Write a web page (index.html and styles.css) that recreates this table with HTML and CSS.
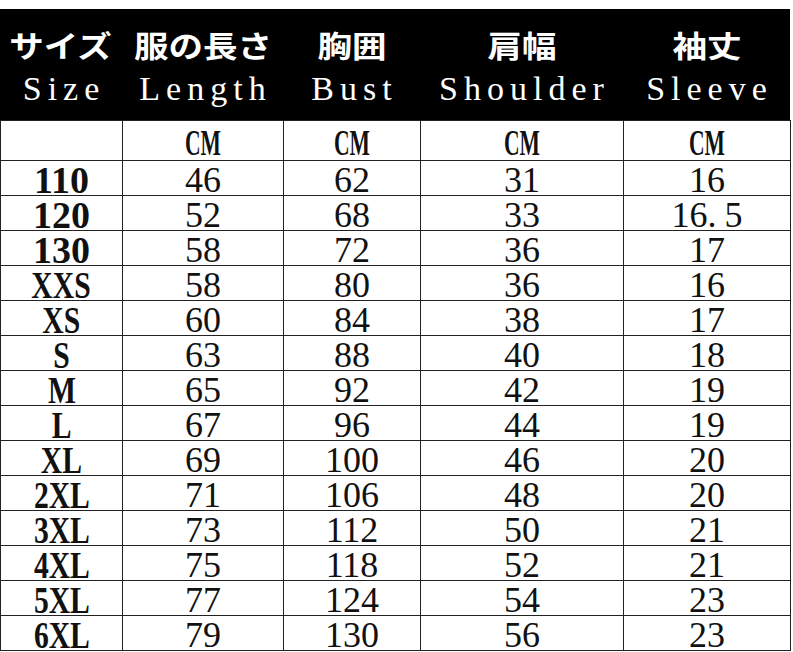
FILE: index.html
```html
<!DOCTYPE html>
<html lang="ja">
<head>
<meta charset="utf-8">
<title>サイズ表</title>
<link rel="stylesheet" href="styles.css">
</head>
<body>
<div class="sheet">
  <div class="head">
    <div class="hcell"><span class="ja">サイズ</span><span class="en">Size</span></div>
    <div class="hcell"><span class="ja">服の長さ</span><span class="en">Length</span></div>
    <div class="hcell"><span class="ja">胸囲</span><span class="en">Bust</span></div>
    <div class="hcell"><span class="ja">肩幅</span><span class="en">Shoulder</span></div>
    <div class="hcell"><span class="ja">袖丈</span><span class="en">Sleeve</span></div>
  </div>
  <table class="chart">
    <colgroup>
      <col class="c-size"><col class="c-len"><col class="c-bust"><col class="c-sh"><col class="c-sl">
    </colgroup>
    <tr class="unit"><td></td><td><span class="cm">CM</span></td><td><span class="cm">CM</span></td><td><span class="cm">CM</span></td><td><span class="cm">CM</span></td></tr>
    <tr><th><span class="sz">110</span></th><td>46</td><td>62</td><td>31</td><td>16</td></tr>
    <tr><th><span class="sz">120</span></th><td>52</td><td>68</td><td>33</td><td>16<span class="dot">.</span>5</td></tr>
    <tr><th><span class="sz">130</span></th><td>58</td><td>72</td><td>36</td><td>17</td></tr>
    <tr><th><span class="sz alpha">XXS</span></th><td>58</td><td>80</td><td>36</td><td>16</td></tr>
    <tr><th><span class="sz alpha">XS</span></th><td>60</td><td>84</td><td>38</td><td>17</td></tr>
    <tr><th><span class="sz alpha">S</span></th><td>63</td><td>88</td><td>40</td><td>18</td></tr>
    <tr><th><span class="sz alpha">M</span></th><td>65</td><td>92</td><td>42</td><td>19</td></tr>
    <tr><th><span class="sz alpha">L</span></th><td>67</td><td>96</td><td>44</td><td>19</td></tr>
    <tr><th><span class="sz alpha">XL</span></th><td>69</td><td>100</td><td>46</td><td>20</td></tr>
    <tr><th><span class="sz alpha">2XL</span></th><td>71</td><td>106</td><td>48</td><td>20</td></tr>
    <tr><th><span class="sz alpha">3XL</span></th><td>73</td><td>112</td><td>50</td><td>21</td></tr>
    <tr><th><span class="sz alpha">4XL</span></th><td>75</td><td>118</td><td>52</td><td>21</td></tr>
    <tr><th><span class="sz alpha">5XL</span></th><td>77</td><td>124</td><td>54</td><td>23</td></tr>
    <tr><th><span class="sz alpha">6XL</span></th><td>79</td><td>130</td><td>56</td><td>23</td></tr>
  </table>
</div>
</body>
</html>
```

FILE: styles.css
```css
html, body {
  margin: 0;
  padding: 0;
  background: #fff;
}

.sheet {
  width: 790px;
  padding-top: 9px;
}

.head {
  display: grid;
  grid-template-columns: 122px 161px 137px 203px 167px;
  height: 111px;
  background: #000;
  color: #fff;
}

.hcell {
  display: flex;
  flex-direction: column;
  align-items: center;
  padding-top: 20px;
}

.ja {
  display: inline-block;
  font-family: "Noto Sans CJK JP", "Noto Sans", sans-serif;
  font-weight: 700;
  font-size: 30px;
  line-height: 30px;
  letter-spacing: 0;
  transform: scaleX(1.15);
  white-space: nowrap;
}

.en {
  display: inline-block;
  margin-top: 14px;
  font-family: "Liberation Serif", "Times New Roman", serif;
  font-size: 34px;
  line-height: 32px;
  letter-spacing: 6px;
  padding-left: 6px;
  white-space: nowrap;
}

.chart {
  width: 790px;
  table-layout: fixed;
  border-collapse: collapse;
  font-family: "Liberation Serif", "Times New Roman", serif;
  color: #111;
}

.c-size { width: 122px; }
.c-len { width: 161px; }
.c-bust { width: 137px; }
.c-sh { width: 203px; }
.c-sl { width: 167px; }

.chart td,
.chart th {
  border: 1px solid #222;
  padding: 4px 0 0;
  text-align: center;
  vertical-align: top;
  font-size: 36px;
  line-height: 30px;
  font-weight: 400;
  white-space: nowrap;
}

.chart th {
  font-size: 38px;
  font-weight: 700;
}

.chart tr {
  height: 35px;
}

.chart tr.unit {
  height: 40px;
}

.chart tr.unit td {
  padding-top: 5px;
  font-size: 36px;
  line-height: 34px;
}

.cm {
  display: inline-block;
  font-weight: 700;
  transform: scaleX(0.6);
}

.sz {
  display: inline-block;
}

.sz.alpha {
  transform: scaleX(0.78);
}

.dot {
  padding-right: 8px;
}
```
